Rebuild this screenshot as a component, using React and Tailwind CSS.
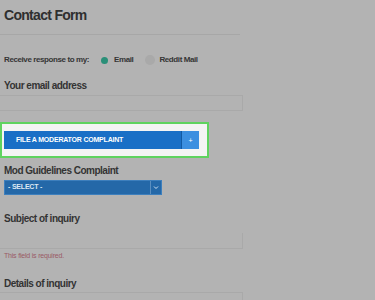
import React from 'react'

const Label = ({ children, className = '' }) => (
    <div className={"text-[10px] leading-[13px] font-bold text-[#333] tracking-[-0.5px] " + className}>{children}</div>
)

const Field = ({ className = '' }) => (
    <div className={"w-[243px] h-[16px] border border-[#a9a9a9] border-l-0 " + className}></div>
)

const App = () => {
    return (
        <div className="w-[375px] h-[300px] overflow-hidden bg-[#b3b3b3] font-['Liberation_Sans',Arial,sans-serif]">
            <div className="pl-[4px] pt-[6px]">
                <h1 className="text-[14px] leading-[18px] font-bold text-[#2f2f2f] tracking-[-0.7px]">Contact Form</h1>
            </div>
            <div className="mt-[10px] w-[240px] h-px bg-[#a7a7a7]"></div>

            <div className="flex items-center pl-[4px] mt-[19px] h-[12px] text-[8px] font-bold text-[#353535] tracking-[-0.4px]">
                <span>Receive response to my:</span>
                <span className="ml-[12px] w-[7px] h-[7px] rounded-full bg-[#2a8f78]"></span>
                <span className="ml-[6px]">Email</span>
                <span className="ml-[12px] w-[10px] h-[10px] rounded-full bg-[#a9a9a9]"></span>
                <span className="ml-[4px]">Reddit Mail</span>
            </div>

            <Label className="mt-[13px] pl-[4px]">Your email address</Label>
            <Field className="mt-[3px]" />

            <div className="mt-[11px] w-[209px] h-[36px] border-2 border-[#5fd35f] bg-[#f4f4f4] flex items-center pl-[2px]">
                <div className="flex w-[195px] h-[18px] bg-[#1a6fc6]">
                    <div className="flex-1 flex items-center pl-[12px] text-[7px] font-bold text-white tracking-[-0.2px]">FILE A MODERATOR COMPLAINT</div>
                    <div className="w-px bg-[#125aa3]"></div>
                    <div className="w-[17px] bg-[#3c8fe0] flex items-center justify-center text-white text-[7px] leading-none">+</div>
                </div>
            </div>

            <Label className="mt-[6px] pl-[4px]">Mod Guidelines Complaint</Label>
            <div className="ml-[4px] mt-[3px] flex w-[158px] h-[15px] bg-[#2468a8] border border-[#3d7fbd]">
                <div className="flex-1 flex items-center pl-[3px] text-[7px] font-bold text-[#dde8f3] tracking-[-0.2px]">- SELECT -</div>
                <div className="w-px bg-[#5b8fc0]"></div>
                <div className="w-[10px] flex items-center justify-center">
                    <svg width="6" height="5" viewBox="0 0 6 5"><path d="M1 1.5 L3 3.5 L5 1.5" fill="none" stroke="#cfe0f0" strokeWidth="1" /></svg>
                </div>
            </div>

            <Label className="mt-[17px] pl-[4px]">Subject of inquiry</Label>
            <Field className="mt-[8px] border-t-0" />
            <div className="pl-[4px] mt-[2px] text-[7px] leading-[10px] text-[#9a5a66] tracking-[-0.2px]">This field is required.</div>

            <Label className="mt-[16px] pl-[4px]">Details of inquiry</Label>
            <Field className="mt-[2px]" />
        </div>
    )
}

export default App
